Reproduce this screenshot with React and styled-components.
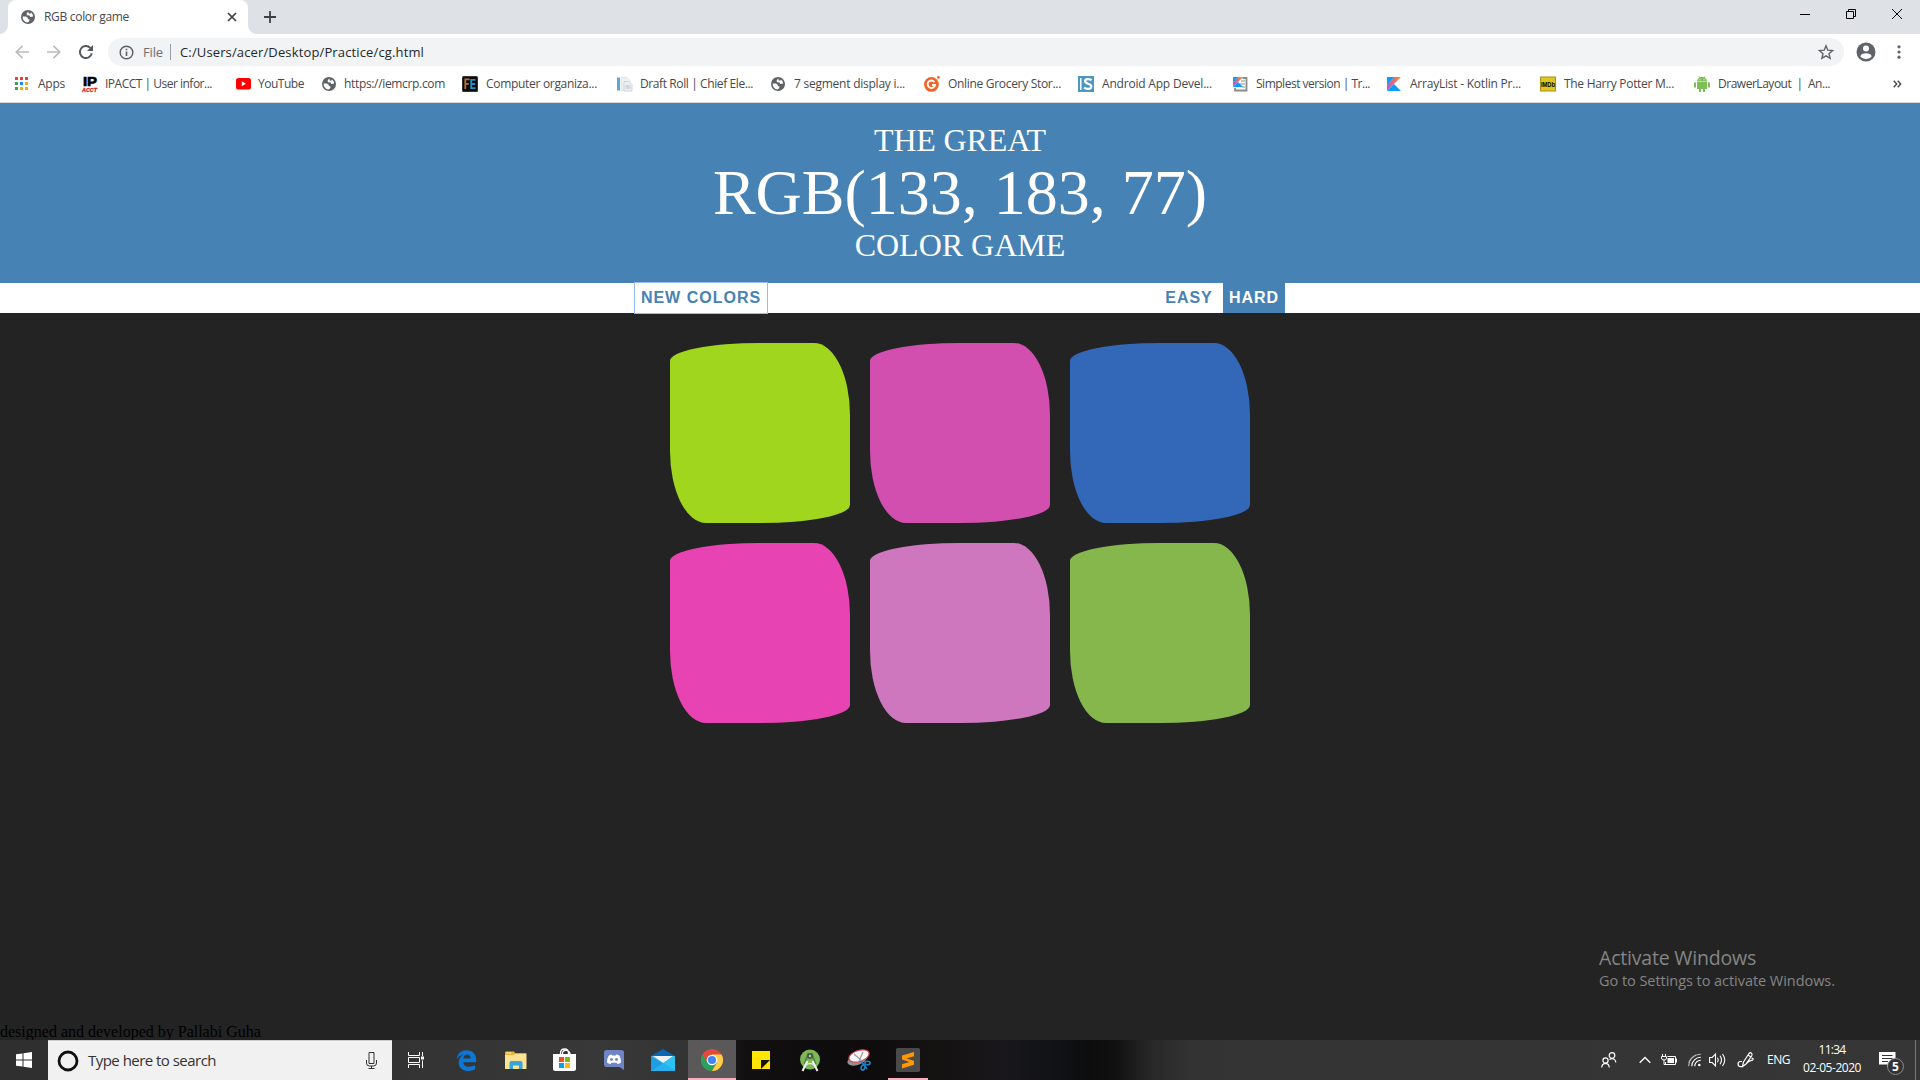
import React from "react";
import styled, { createGlobalStyle } from "styled-components";

const ui = '"Open Sans", "Noto Sans", sans-serif';

const Global = createGlobalStyle`
  * { box-sizing: border-box; }
  body { margin: 0; background: #232323; overflow: hidden; }
  svg { display: block; flex: none; overflow: visible; }
  button { font: inherit; border: 0; margin: 0; padding: 0; background: none; color: inherit; display: flex; align-items: center; }
`;

const Screen = styled.div`
  width: 1920px;
  height: 1080px;
  display: flex;
  flex-direction: column;
  background: #232323;
  overflow: hidden;
`;

/* ---------- browser ---------- */
const TabStrip = styled.div`
  height: 34px;
  flex: none;
  display: flex;
  background: #dee1e6;
  padding-left: 8px;
`;
const Tab = styled.div`
  width: 240px;
  height: 34px;
  display: flex;
  align-items: center;
  padding: 0 11px 0 13px;
  background: #fff;
  border-radius: 8px 8px 0 0;
  position: relative;
  &::before, &::after {
    content: "";
    position: absolute;
    bottom: 0;
    width: 8px;
    height: 8px;
  }
  &::before { left: -8px; background: radial-gradient(circle at 0 0, transparent 7.5px, #fff 8px); }
  &::after { right: -8px; background: radial-gradient(circle at 100% 0, transparent 7.5px, #fff 8px); }
`;
const Label = styled.span`
  font-family: ${ui};
  font-size: ${(p) => p.$size}px;
  line-height: 16px;
  color: ${(p) => p.$color};
  white-space: pre;
`;
const TabTitle = styled.div`
  flex: 1;
  display: flex;
  padding: 0 0 1px 9px;
`;
const NewTab = styled.button`
  width: 28px;
  justify-content: center;
  margin-left: 8px;
`;
const WindowButtons = styled.div`
  margin-left: auto;
  display: flex;
  height: 28px;
`;
const WindowButton = styled.button`
  width: 46px;
  justify-content: center;
`;
const Toolbar = styled.div`
  height: 36px;
  flex: none;
  display: flex;
  align-items: center;
  background: #fff;
  padding: 4px 12px;
`;
const NavButton = styled.button`
  width: 20px;
  height: 20px;
  justify-content: center;
  margin-right: 12px;
`;
const Omnibox = styled.div`
  flex: 1;
  height: 28px;
  border-radius: 14px;
  background: #f1f3f4;
  display: flex;
  align-items: center;
  padding: 0 10px 0 11px;
`;
const Scheme = styled.div`
  display: flex;
  margin-left: 9px;
`;
const OmniDivider = styled.div`
  width: 1px;
  height: 16px;
  margin: 0 9px 0 7px;
  background: #9aa0a6;
`;
const Spacer = styled.div`flex: 1;`;
const ProfileButton = styled.button`margin: 0 14px 0 12px;`;
const Bookmarks = styled.div`
  height: 33px;
  flex: none;
  display: grid;
  grid-template-columns: ${(p) => p.$cols};
  background: #fff;
  border-bottom: 1px solid #d6d8db;
  padding-left: 15px;
`;
const Bookmark = styled.div`
  display: flex;
  align-items: center;
  height: 28px;
  gap: ${(p) => p.$gap}px;
`;

/* ---------- game ---------- */
const Page = styled.main`
  flex: 1;
  display: flex;
  flex-direction: column;
  min-height: 0;
`;
const GameHeader = styled.h1`
  margin: 0;
  height: 180px;
  flex: none;
  padding: 20px 0;
  text-align: center;
  background: steelblue;
  color: #fff;
  font: 400 32px/35px "Liberation Serif", serif;
  text-transform: uppercase;
`;
const TitleTop = styled.div`letter-spacing: -0.15px;`;
const ColorName = styled.div`
  font-size: 64px;
  line-height: 70px;
`;
const Stripe = styled.div`
  height: 30px;
  flex: none;
  background: #fff;
  display: flex;
  justify-content: center;
`;
const Controls = styled.div`
  width: 650px;
  display: flex;
`;
const GameButton = styled.button`
  height: 30px;
  width: ${(p) => p.$w}px;
  justify-content: center;
  padding-bottom: 1px;
  white-space: nowrap;
  font: 700 16px/18px "Liberation Sans", Arial, sans-serif;
  letter-spacing: 1px;
  background: ${(p) => (p.$on ? "steelblue" : "#fff")};
  color: ${(p) => (p.$on ? "#fff" : "steelblue")};
  outline: ${(p) => (p.$focused ? "1px solid #94bbf8" : "none")};
`;
const Squares = styled.div`
  display: grid;
  grid-template-columns: repeat(3, 180px);
  gap: 20px;
  justify-content: center;
  margin-top: 30px;
`;
const Square = styled.div`
  height: 180px;
  background: ${(p) => p.$c};
  border-radius: 50% 20% / 10% 40%;
`;
const Activate = styled.aside`
  margin: auto 0 0 1599px;
  display: flex;
  flex-direction: column;
  align-items: flex-start;
  gap: 7px;
`;
const Credit = styled.footer`
  margin-top: 34px;
  height: 17px;
  font: 16px/18px "Liberation Serif", serif;
  color: #000;
`;

/* ---------- taskbar ---------- */
const Taskbar = styled.div`
  height: 40px;
  flex: none;
  display: flex;
  background: linear-gradient(90deg, #2f2f2f 0, #333 400px, #383838 600px, #333 690px, #120f10 745px, #0d0b0c 860px, #151212 940px, #19171b 1005px, #111317 1050px, #0d0d0d 1090px, #101010 1115px, #272727 1150px, #333 1190px, #363636 100%);
`;
const Start = styled.button`
  width: 48px;
  justify-content: center;
`;
const Search = styled.div`
  width: 344px;
  background: #f1f1f1;
  border-top: 1px solid #cfcfcf;
  display: flex;
  align-items: center;
  padding: 0 15px 0 9px;
`;
const SearchText = styled.div`
  flex: 1;
  display: flex;
  padding: 0 0 2px 9px;
`;
const TaskButton = styled.button`
  width: ${(p) => p.$w}px;
  margin-left: ${(p) => p.$ml || 0}px;
  justify-content: center;
  background: ${(p) => (p.$active ? "#5a5858" : "none")};
  box-shadow: ${(p) => (p.$running ? "inset 0 -2px #f7afbd" : "none")};
`;
const Tray = styled.div`
  margin-left: auto;
  width: 320px;
  display: flex;
  align-items: center;
  color: #fff;
`;
const TrayItem = styled.div`
  width: ${(p) => p.$w}px;
  margin-left: ${(p) => p.$ml}px;
  flex: none;
`;
const Language = styled(TrayItem)`
  display: flex;
  padding-bottom: 1px;
`;
const Clock = styled(TrayItem)`
  display: flex;
  flex-direction: column;
  align-items: center;
  gap: 2px;
  padding-bottom: 2px;
`;
const Notice = styled(TrayItem)`position: relative;`;
const Badge = styled.span`
  position: absolute;
  left: 8px;
  top: 6px;
  width: 17px;
  height: 17px;
  border: 1px solid #8b8b8b;
  border-radius: 50%;
  background: #333;
  font: 700 12px/15px ${ui};
  text-align: center;
`;
const ShowDesktop = styled.div`
  margin-left: auto;
  width: 5px;
  height: 40px;
  border-left: 1px solid #7b7b7b;
`;

/* Spreads a line of text over a fixed measure by letter spacing. */
function Text({ w, children, size = 12, color = "#45494d" }) {
  const ref = React.useRef(null);
  const [spacing, setSpacing] = React.useState(0);
  React.useLayoutEffect(() => {
    const natural = ref.current.getBoundingClientRect().width - spacing * children.length;
    setSpacing((w - natural) / children.length);
  }, [w, children]);
  return (
    <Label ref={ref} $size={size} $color={color} style={{ letterSpacing: spacing }}>
      {children}
    </Label>
  );
}

const Globe = () => (
  <svg width="14" height="14" viewBox="0 0 14 14">
    <circle cx="7" cy="7" r="7" fill="#5f6368" />
    <path d="M7.2 1.6 5.6 3.5 6 5.2 8.6 5.6 9.3 7 12.2 6.6A5.4 5.4 0 0 0 10 2.5L9.2 3.8 7.9 3.4ZM1.7 6.4l3.3.1 1.9 1.5-.1 1.1 1.7.5-.3 1.6-1.7 1.2A5.4 5.4 0 0 1 1.7 6.4Z" fill="#fff" />
  </svg>
);
const AppsIcon = () => (
  <svg width="14" height="14">
    {["#ea4335", "#ea4335", "#ea4335", "#34a853", "#1a8cff", "#f5ac05", "#34a853", "#f5ac05", "#f5ac05"].map((c, i) => (
      <rect key={i} x={(i % 3) * 5} y={Math.floor(i / 3) * 5} width="3" height="3" fill={c} />
    ))}
  </svg>
);
const IpIcon = () => (
  <svg width="16" height="16">
    <text x="1" y="10" fontFamily="Liberation Sans" fontWeight="700" fontSize="13" stroke="#000" strokeWidth=".7" textLength="14" lengthAdjust="spacingAndGlyphs">IP</text>
    <text x="0" y="15.5" fontFamily="Liberation Sans" fontWeight="700" fontStyle="italic" fontSize="5.5" fill="#e02020" stroke="#e02020" strokeWidth=".3" textLength="15" lengthAdjust="spacingAndGlyphs">ACCT</text>
  </svg>
);
const YoutubeIcon = () => (
  <svg width="15" height="12">
    <rect width="15" height="11.5" rx="2.6" fill="#f00" />
    <path d="M5.8 3.3v4.9L10 5.7Z" fill="#fff" />
  </svg>
);
const FeIcon = () => (
  <svg width="16" height="16">
    <rect width="16" height="16" rx="1.5" fill="#333" />
    <rect x="1" y="1" width="14" height="14" fill="#0b0b0b" />
    <path d="M3.3 13V3.3h4.3M3.3 7.8h3.5" fill="none" stroke="#b9713a" strokeWidth="1.8" />
    <path d="M13.5 3.8H9.2v8.4h4.3M9.2 8h4" fill="none" stroke="#2091c9" strokeWidth="1.8" />
  </svg>
);
const DraftIcon = () => (
  <svg width="16" height="16">
    <rect x="0" y="1.5" width="3" height="13" fill="#5ba7d6" />
    <path d="M4 1.5h6l3 3v10H4Z" fill="#edf0f5" stroke="#d8dde5" strokeWidth=".7" />
    <path d="M7 5.5h5l3 3V15H7Z" fill="#eef1f4" stroke="#c7ced6" strokeWidth=".8" />
    <path d="M8.5 10h5M8.5 12h5" stroke="#b5bdc6" />
  </svg>
);
const GrocersIcon = () => (
  <svg width="16" height="16">
    <circle cx="7.4" cy="8.4" r="7.4" fill="#f0642a" />
    <circle cx="14.4" cy="1.4" r="1.4" fill="#f0642a" />
    <path d="M10.5 6.2A3.7 3.7 0 1 0 11 9H8" fill="none" stroke="#fff" strokeWidth="1.9" />
  </svg>
);
const IsIcon = () => (
  <svg width="16" height="16">
    <rect width="16" height="16" fill="#4a97c4" />
    <path d="M2.8 2v12" stroke="#fff" strokeWidth="1.5" />
    <path d="M13.5 4.3C12 2.6 7 2.7 7.1 5.4c.1 2.7 6.2 2 6.2 5 0 3.1-5.4 3.1-7.2 1.2" fill="none" stroke="#fff" strokeWidth="2.2" />
  </svg>
);
const KotlinShape = ({ size, id }) => (
  <>
    <defs>
      <linearGradient id={id} gradientUnits="userSpaceOnUse" x1={size} y1="0" x2="0" y2={size}>
        <stop offset=".1" stopColor="#f0873c" />
        <stop offset=".5" stopColor="#d66a8a" />
        <stop offset="1" stopColor="#8a6be0" />
      </linearGradient>
    </defs>
    <path d={`M${size * 0.5} 0H${size}L0 ${size}V${size * 0.5}Z`} fill={`url(#${id})`} />
    <path d={`M0 0H${size * 0.52}L0 ${size * 0.54}ZM0 ${size}L${size * 0.5} ${size * 0.5}L${size} ${size}Z`} fill="#0d9bfb" />
  </>
);
const KotlinIcon = () => <svg width="14" height="14"><KotlinShape size={14} id="kt" /></svg>;
const KotlinPageIcon = () => (
  <svg width="15" height="16">
    <path d="M9.5 2h4v12.5H2V12" fill="none" stroke="#8b8b8b" strokeWidth="1.8" />
    <path d="M8 5h4M7 8h5M9 11h3" stroke="#8b8b8b" strokeWidth="1" />
    <g transform="translate(0 1)"><KotlinShape size={10} id="ktp" /></g>
  </svg>
);
const ImdbIcon = () => (
  <svg width="16" height="16">
    <rect y=".5" width="16" height="15" fill="#a8911c" />
    <rect x="1" y="1.5" width="14" height="13" fill="#e2c51c" />
    <text x="1" y="11" fontFamily="Liberation Sans" fontWeight="700" fontSize="8" textLength="14" lengthAdjust="spacingAndGlyphs">IMDb</text>
  </svg>
);
const AndroidIcon = () => (
  <svg width="16" height="16" fill="#7cbf57">
    <path d="M3 5.5C3.2 3.5 4.4 2.2 5.3 1.7L4.4.4 5 0l1 1.4c1.2-.5 2.8-.5 4 0L11 0l.6.4-.9 1.3c1 .5 2.1 1.8 2.3 3.8ZM3 6h10v7H3ZM0 6.400h2v5H0ZM14 6.400h2v5h-2ZM5 12h2v4H5ZM9 12h2v4H9Z" />
    <path d="M5.5 3.3h1v1h-1ZM9.5 3.3h1v1h-1Z" fill="#fff" />
  </svg>
);

/* icon, title, title width, column width, gap */
const bookmarks = [
  [AppsIcon, "Apps", 27, 67, 9],
  [IpIcon, "IPACCT | User infor...", 107, 154, 7],
  [YoutubeIcon, "YouTube", 46, 86, 7],
  [Globe, "https://iemcrp.com", 101, 140, 8],
  [FeIcon, "Computer organiza...", 111, 155, 8],
  [DraftIcon, "Draft Roll | Chief Ele...", 113, 154, 7],
  [Globe, "7 segment display i...", 111, 153, 9],
  [GrocersIcon, "Online Grocery Stor...", 113, 154, 8],
  [IsIcon, "Android App Devel...", 110, 155, 8],
  [KotlinPageIcon, "Simplest version | Tr...", 114, 154, 8],
  [KotlinIcon, "ArrayList - Kotlin Pr...", 111, 153, 9],
  [ImdbIcon, "The Harry Potter M...", 110, 154, 8],
  [AndroidIcon, "DrawerLayout  |  An...", 112, 199, 8],
];

const Edge = () => (
  <svg width="21" height="21" viewBox="0 0 21 21">
    <path d="M.6 9.3C1.5 3.5 5.6.3 10.7.3c6 0 9.5 4.2 9.5 9.6v2.3H7.2c.1 3.2 2.9 4.6 5.8 4.6 2.4 0 4.4-.7 6-1.7v4.2c-1.8 1-4.1 1.6-6.8 1.6-6.1 0-9.5-3.5-9.5-8.2 0-3.7 1.9-6.7 5.1-8.3C4.8 4.9 2.2 6.5.6 9.3Zm6.7-.8h7.2c0-2.400-1.100-3.900-3.400-3.900-2.100 0-3.600 1.700-3.800 3.900Z" fill="#0b78d8" />
  </svg>
);
const Folder = () => (
  <svg width="22" height="19" viewBox="0 0 22 19">
    <path d="M0 1.5Q0 .5 1 .5h8l1.5 2H21v15H0Z" fill="#e8b339" />
    <path d="M0 4 9 4 10.5 2.5H21.5V18H0Z" fill="#fce394" />
    <path d="M4.5 18v-6Q4.5 10 6.5 10h9q2 0 2 2v6h-3.500v-3.500h-6V18Z" fill="#35a5dc" />
    <path d="M1.5 2h5" stroke="#fff2bd" />
  </svg>
);
const Store = () => (
  <svg width="23" height="24" viewBox="0 0 23 24">
    <path d="M7.5 6V5Q7.5 1 11.5 1t4 4v1M9.5 6V4.5Q10.5 1.5 14 2.5 17 3.5 17 6" fill="none" stroke="#fff" strokeWidth="1.3" />
    <path d="M0 6h23v14.500Q23 23 20.500 23h-18Q0 23 0 20.500Z" fill="#fff" />
    <path d="M6 9h5v5H6Z" fill="#f25022" /><path d="M12 9h5v5h-5Z" fill="#7fba00" />
    <path d="M6 15h5v5H6Z" fill="#00a4ef" /><path d="M12 15h5v5h-5Z" fill="#ffb900" />
  </svg>
);
const Discord = () => (
  <svg width="20" height="20" viewBox="0 0 20 20">
    <path d="M2.5 0h15Q20 0 20 2.5V20l-4.500-3H2.5Q0 17 0 14.5v-12Q0 0 2.5 0Z" fill="#6f83c5" />
    <path d="M3 12.5C3 9 4 6.5 5 5.5 6.2 4.7 7.5 4.5 7.5 4.5l.7.9h3.6l.7-.9s1.5.2 2.700 1C16 6.500 17 9 17 12.500c-1.500 1.400-3.500 1.500-3.500 1.500l-1-1.200h-5l-1 1.200S4.500 13.900 3 12.500Z" fill="#fff" />
    <circle cx="7.5" cy="9.5" r="1.4" fill="#6f83c5" /><circle cx="12.5" cy="9.5" r="1.4" fill="#6f83c5" />
  </svg>
);
const Mail = () => (
  <svg width="24" height="22" viewBox="0 0 24 22">
    <path d="M0 7 12 0l12 7Z" fill="#0868b5" />
    <path d="M0 7h24v15H0Z" fill="#2dc2f4" />
    <path d="M2 7h20l-10 7Z" fill="#f1f1f1" />
    <path d="M0 7v15h24L12 14Z" fill="#1f9ce4" />
    <path d="M0 22 12 14l12 8Z" fill="#28b0f0" />
  </svg>
);
const Chrome = () => (
  <svg width="22" height="22" viewBox="0 0 22 22">
    <circle cx="11" cy="11" r="11" fill="#e14a3b" />
    <path d="M1.47 5.5A11 11 0 0 0 11 22l4.8-8.2L11 11 6.3 13.8Z" fill="#27a25b" />
    <path d="M20.53 5.5A11 11 0 0 1 11 22l4.9-8.3L11 11V5.5Z" fill="#fcd149" />
    <circle cx="11" cy="11" r="5.3" fill="#fff" /><circle cx="11" cy="11" r="4.1" fill="#4285f4" />
  </svg>
);
const Sticky = () => (
  <svg width="18" height="18">
    <path d="M0 0h18v18H0Z" fill="#ffe600" />
    <path d="M9 9h9l-9 9Z" fill="#151200" />
  </svg>
);
const Studio = () => (
  <svg width="22" height="23" viewBox="0 0 22 23">
    <circle cx="11" cy="10.5" r="10" fill="#7cb855" />
    <path d="M9.5 4 5.5 15M12.5 4l4 11" stroke="#5f7f50" strokeWidth="2" />
    <circle cx="11" cy="7" r="3" fill="#4b5a48" /><circle cx="11" cy="7" r="1.2" fill="#a8d58c" />
    <path d="M8.5 12 3.5 22M13.5 12l5 10" stroke="#f2f2f2" strokeWidth="2" />
    <path d="M7 16q4-3 8 0" fill="none" stroke="#e2e2e2" strokeWidth="1.5" />
  </svg>
);
const Snip = () => (
  <svg width="24" height="22" viewBox="0 0 24 22">
    <ellipse cx="10" cy="11" rx="10" ry="5" transform="rotate(-18 10 11)" fill="#8f8f96" />
    <ellipse cx="12" cy="7" rx="10.5" ry="5.5" transform="rotate(-18 12 7)" fill="#f6f6f8" stroke="#d34750" strokeWidth="1.2" />
    <path d="m7 5 8 7M16 3l-4 9" stroke="#9c9ca2" strokeWidth="1.2" />
    <g fill="none" stroke="#1c82c4" strokeWidth="1.6"><ellipse cx="20.5" cy="14" rx="2.6" ry="1.7" /><ellipse cx="16" cy="18.5" rx="1.8" ry="2.6" transform="rotate(20 16 18.5)" /><path d="m14 12 6 8" /></g>
  </svg>
);
const Sublime = () => (
  <svg width="24" height="24" viewBox="0 0 24 24">
    <rect width="24" height="24" rx="1.5" fill="#4a4a4a" />
    <path d="M6 7.5 18 4v4.3L10.5 10.5 18 12.8v4L6 20.500v-4.300l7.300-2.300L6 11.500Z" fill="#ff9800" />
  </svg>
);

const apps = [
  { Icon: Edge, w: 51 },
  { Icon: Folder, w: 48 },
  { Icon: Store, w: 49 },
  { Icon: Discord, w: 50 },
  { Icon: Mail, w: 48 },
  { Icon: Chrome, w: 48, ml: 1, active: true, running: true },
  { Icon: Sticky, w: 50 },
  { Icon: Studio, w: 48 },
  { Icon: Snip, w: 50 },
  { Icon: Sublime, w: 40, ml: 4, running: true },
];
const colors = ["#a0d61e", "#d24fb0", "#3368b9", "#e743b2", "#cf77be", "#85b74d"];

export default function App() {
  return (
    <Screen>
      <Global />
      <TabStrip>
        <Tab>
          <Globe />
          <TabTitle><Text w={85}>RGB color game</Text></TabTitle>
          <svg width="10" height="10"><path d="m1 1 8 8M9 1 1 9" stroke="#3c4043" strokeWidth="1.7" /></svg>
        </Tab>
        <NewTab><svg width="12" height="12"><path d="M6 0v12M0 6h12" stroke="#3c4043" strokeWidth="1.8" /></svg></NewTab>
        <WindowButtons>
          <WindowButton><svg width="10" height="10"><path d="M0 5.5h10" stroke="#000" /></svg></WindowButton>
          <WindowButton><svg width="10" height="10"><path d="M.5 2.5h7v7h-7ZM2.5 2V.5h7v7H8" fill="none" stroke="#000" /></svg></WindowButton>
          <WindowButton><svg width="10" height="10"><path d="m0 0 10 10M10 0 0 10" stroke="#000" /></svg></WindowButton>
        </WindowButtons>
      </TabStrip>
      <Toolbar>
        <NavButton><svg width="14" height="14"><path d="M14 7H1.5M7.5.8 1.3 7l6.200 6.200" fill="none" stroke="#babcbe" strokeWidth="1.7" /></svg></NavButton>
        <NavButton><svg width="14" height="14"><path d="M0 7h12.5M6.5.8 12.7 7l-6.200 6.200" fill="none" stroke="#babcbe" strokeWidth="1.7" /></svg></NavButton>
        <NavButton><svg width="14" height="14"><path d="M12.8 8.3A6 6 0 1 1 11.3 2.9L13 4.6" fill="none" stroke="#54585d" strokeWidth="1.9" /><path d="M14 0v6H8Z" fill="#54585d" /></svg></NavButton>
        <Omnibox>
          <svg width="15" height="15"><circle cx="7.5" cy="7.5" r="6.3" fill="none" stroke="#5f6368" strokeWidth="1.5" /><path d="M7.5 6.5v4.500M7.5 3.7v1.600" stroke="#5f6368" strokeWidth="1.6" /></svg>
          <Scheme><Text w={20} size={13} color="#6b6f74">File</Text></Scheme>
          <OmniDivider />
          <Text w={244} size={13} color="#25282b">C:/Users/acer/Desktop/Practice/cg.html</Text>
          <Spacer />
          <svg width="16" height="16" viewBox="0 0 16 16"><path d="m8 1.800 1.800 4.400 4.800.4L11 9.700l1.100 4.700L8 11.900l-4.100 2.500L5 9.700 1.400 6.600l4.800-.4Z" fill="none" stroke="#5f6368" strokeWidth="1.4" /></svg>
        </Omnibox>
        <ProfileButton><svg width="20" height="20"><circle cx="10" cy="10" r="9.5" fill="#5f6368" /><circle cx="10" cy="6.5" r="3" fill="#fff" /><path d="M4.300 14.200C5 11.900 8 11.300 10 11.300s5 .6 5.700 2.900A7 7 0 0 1 4.300 14.200Z" fill="#fff" /></svg></ProfileButton>
        <svg width="18" height="16" fill="#5f6368"><circle cx="9" cy="2.8" r="1.6" /><circle cx="9" cy="8" r="1.6" /><circle cx="9" cy="13.2" r="1.6" /></svg>
      </Toolbar>
      <Bookmarks $cols={bookmarks.map((b) => b[3] + "px").join(" ") + " 1fr"}>
        {bookmarks.map(([Icon, text, w, , gap]) => (
          <Bookmark key={text} $gap={gap}><Icon /><Text w={w}>{text}</Text></Bookmark>
        ))}
        <Bookmark><svg width="9" height="8"><path d="m.7.7 3 3.300-3 3.300M4.700.7l3 3.300-3 3.300" fill="none" stroke="#4e5256" strokeWidth="1.5" /></svg></Bookmark>
      </Bookmarks>

      <Page>
        <GameHeader>
          <TitleTop>The Great</TitleTop>
          <ColorName>rgb(133, 183, 77)</ColorName>
          Color Game
        </GameHeader>
        <Stripe>
          <Controls>
            <GameButton $w={132} $focused>NEW COLORS</GameButton>
            <Spacer />
            <GameButton $w={68}>EASY</GameButton>
            <GameButton $w={62} $on>HARD</GameButton>
          </Controls>
        </Stripe>
        <Squares>{colors.map((c) => <Square key={c} $c={c} />)}</Squares>
        <Activate>
          <Text w={157} size={19.5} color="#858585">Activate Windows</Text>
          <Text w={236} size={14.5} color="#858585">Go to Settings to activate Windows.</Text>
        </Activate>
        <Credit>designed and developed by Pallabi Guha</Credit>
      </Page>

      <Taskbar>
        <Start><svg width="16" height="16"><path d="M0 2.300 6.500 1.400V7.500H0ZM7.500 1.200 16 0v7.500H7.500ZM0 8.500h6.500v6.100L0 13.700ZM7.500 8.500H16V16l-8.500-1.200Z" fill="#fff" /></svg></Start>
        <Search>
          <svg width="22" height="22"><circle cx="11" cy="11" r="9" fill="none" stroke="#111" strokeWidth="2.8" /></svg>
          <SearchText><Text w={128} size={15} color="#333">Type here to search</Text></SearchText>
          <svg width="11" height="17"><path d="M3 .5h5v11H3ZM.5 8v3q0 3 3 3h4q3 0 3-3V8M5.5 14v2.500M2.5 16.500h6" fill="none" stroke="#333" /></svg>
        </Search>
        <TaskButton $w={49}><svg width="17" height="16"><path d="M.5 0v3.500h11V0M.5 16v-3.500h11V16M.5 5.500h11v5H.5ZM14.500 0v4M14.500 8.500V16" fill="none" stroke="#fff" /><path d="M13 4.500h3v3h-3Z" fill="#fff" /></svg></TaskButton>
        {apps.map(({ Icon, w, ml, active, running }, i) => (
          <TaskButton key={i} $w={w} $ml={ml} $active={active} $running={running}><Icon /></TaskButton>
        ))}
        <Tray>
          <TrayItem $w={16} $ml={1}>
            <svg width="16" height="16" fill="none" stroke="#fff" strokeWidth="1.2"><circle cx="11" cy="3.5" r="2.8" /><circle cx="4.5" cy="8.5" r="2.6" /><path d="M.7 15.500q.3-4 3.800-4.200 3.500.2 3.800 4.200M8.500 7.500 11 6.500q3.500.5 3.800 4" /></svg>
          </TrayItem>
          <TrayItem $w={12} $ml={22}>
            <svg width="12" height="8"><path d="m.7 6.700 5.300-5.200 5.300 5.200" fill="none" stroke="#fff" strokeWidth="1.3" /></svg>
          </TrayItem>
          <TrayItem $w={17} $ml={10}>
            <svg width="17" height="12"><path d="M6.500 2.500h8v8h-10V8M15.500 4.500v4M1.500 0v2M4.500 0v2M.5 2.500h5v1.500q0 2-2.500 2t-2.500-2ZM3 6v4.500h2" fill="none" stroke="#fff" /><path d="M6.500 4h6.500v5h-6.500Z" fill="#fff" /></svg>
          </TrayItem>
          <TrayItem $w={14} $ml={10}>
            <svg width="14" height="14" fill="none" stroke="#fff" strokeWidth="1.1">
              <path d="M.8 13.200A12 12 0 0 1 12.800 1.200M.8 9.800A13 13 0 0 1 8 2" stroke="#bbb" />
              <path d="M3.800 13.200a9 9 0 0 1 9-9M6.800 13.200a6 6 0 0 1 6-6" />
              <circle cx="11.3" cy="12" r="1.3" fill="#fff" stroke="none" />
            </svg>
          </TrayItem>
          <TrayItem $w={17} $ml={7}>
            <svg width="17" height="14" fill="none" stroke="#fff" strokeWidth="1.1"><path d="M.6 4.500h2.600L6.500 1.200v11.600L3.200 9.500H.6ZM8.500 4.700q1.600 2.300 0 4.600M11 2.800q3 4.200 0 8.400M13.500 1q4.500 6 0 12" /></svg>
          </TrayItem>
          <TrayItem $w={17} $ml={11}>
            <svg width="17" height="17" fill="none" stroke="#fff" strokeWidth="1.2"><path d="M5.500 14.500 6.500 10 12 1.500q1.300-1.500 2.600-.2 1 1.100 0 2.700L9 12ZM11 3l3 2M5 9.500H3.500Q1 9.500 1 12t2.500 2.700q2.500 0 5.500-2.800 3-3.200 5.500-3.500 2-.1 1.500-2l-1.500-.3" /></svg>
          </TrayItem>
          <Language $w={23} $ml={13}><Text w={23} color="#fff">ENG</Text></Language>
          <Clock $w={58} $ml={13}>
            <Text w={27} color="#fff">11:34</Text>
            <Text w={58} color="#fff">02-05-2020</Text>
          </Clock>
          <Notice $w={24} $ml={18}>
            <svg width="17" height="16"><path d="M0 0h16.500v12.500H12l-4 3v-3H0Z" fill="#fff" /><path d="M3 3.500h10.500M3 6.500h10.500M3 9.500h6" stroke="#333" /></svg>
            <Badge>5</Badge>
          </Notice>
          <ShowDesktop />
        </Tray>
      </Taskbar>
    </Screen>
  );
}
